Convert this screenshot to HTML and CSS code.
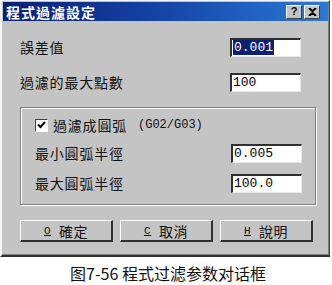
FILE: index.html
```html
<!DOCTYPE html>
<html>
<head>
<meta charset="utf-8">
<link rel="stylesheet" href="styles.css">
</head>
<body>
<div class="dialog">
  <div class="titlebar">
    <span class="title">程式過濾設定</span>
    <div class="tbtns">
      <span class="tbtn">?</span>
      <span class="tbtn x">
        <svg width="9" height="8" viewBox="0 0 9 8"><path d="M1 0L4.5 3.2L8 0M1 8L4.5 4.8L8 8" stroke="#000" stroke-width="2" fill="none"/></svg>
      </span>
    </div>
  </div>
  <div class="content">
    <div class="row"><span class="lbl">誤差值</span><div class="field"><span class="sel">0.001</span></div></div>
    <div class="row"><span class="lbl">過濾的最大點數</span><div class="field">100</div></div>
    <div class="group">
      <div class="chkrow"><span class="chk"><svg width="9" height="8" viewBox="0 0 9 8"><path d="M1 3.5L3.5 6L8 1" stroke="#000" stroke-width="2" fill="none"/></svg></span><span class="lbl">過濾成圓弧</span><span class="code">(G02/G03)</span></div>
      <div class="row inner"><span class="lbl">最小圓弧半徑</span><div class="field">0.005</div></div>
      <div class="row inner"><span class="lbl">最大圓弧半徑</span><div class="field">100.0</div></div>
    </div>
    <div class="buttons">
      <div class="btn"><span class="u">O</span><span>確定</span></div>
      <div class="btn"><span class="u">C</span><span>取消</span></div>
      <div class="btn"><span class="u">H</span><span>說明</span></div>
    </div>
  </div>
</div>
<div class="caption">图7-56 程式过滤参数对话框</div>
</body>
</html>
```
FILE: styles.css
```css
html, body { margin: 0; padding: 0; background: #fff; }
body { width: 332px; height: 285px; overflow: hidden; font-family: "Noto Sans CJK TC", "Noto Sans", sans-serif; }
.dialog {
  width: 327px; height: 254px;
  background: #c4c4c4;
  border-left: 2px solid #f4f4f4;
  border-top: 1px solid #f4f4f4;
  border-right: 1px solid #404040;
  border-bottom: 2px solid #303030;
  box-shadow: inset -1px -1px 0 #808080;
  display: flex; flex-direction: column;
}
.titlebar {
  height: 19px; margin: 1px 1px 0 1px;
  background: linear-gradient(to right, #0a1f78 0%, #1446a8 50%, #2a7ad8 100%);
  display: flex; align-items: center; justify-content: space-between;
}
.title { color: #fff; font-weight: bold; font-size: 14px; padding-left: 3px; letter-spacing: 1px; }
.tbtns { display: flex; gap: 2px; padding-right: 8px; }
.tbtn {
  width: 14px; height: 12px; background: #c4c4c4;
  border-top: 1px solid #fff; border-left: 1px solid #fff;
  border-right: 1px solid #404040; border-bottom: 1px solid #404040;
  font: bold 11px "Liberation Sans", sans-serif; color: #000;
  display: flex; align-items: center; justify-content: center; line-height: 1;
}
.content { padding: 16px 13px 0 18px; display: flex; flex-direction: column; }
.row { display: flex; align-items: center; justify-content: space-between; height: 20px; padding-right: 15px; }
.row + .row { margin-top: 15px; }
.lbl { font-size: 14px; color: #111; letter-spacing: 0.8px; }
.field {
  width: 67px; height: 16px; background: #fff;
  border-top: 2px solid #303030; border-left: 2px solid #303030;
  border-right: 1px solid #e8e8e8; border-bottom: 1px solid #e8e8e8;
  font: 13px "Liberation Mono", monospace; color: #000;
  display: flex; align-items: center; padding-left: 1px;
}
.sel { background: #0a2070; color: #fff; padding: 0 1px; }
.group {
  margin-top: 15px; height: 96px;
  border: 1px solid #808080; box-shadow: 1px 1px 0 #fff, inset 1px 1px 0 #fff;
  padding: 0 0 0 14px; display: flex; flex-direction: column;
}
.chkrow { display: flex; align-items: center; height: 20px; margin-top: 7px; gap: 5px; }
.chk {
  width: 11px; height: 11px; background: #fff;
  border-top: 1px solid #404040; border-left: 1px solid #404040;
  border-right: 1px solid #fff; border-bottom: 1px solid #fff;
  display: flex; align-items: center; justify-content: center;
}
.code { font: 12px "Liberation Mono", monospace; color: #111; margin-left: 6px; }
.row.inner { padding-right: 13px; }
.chkrow + .row.inner { margin-top: 8px; }
.row.inner + .row.inner { margin-top: 10px; }
.buttons { display: flex; gap: 7px; margin-top: 15px; }
.btn {
  width: 90px; height: 19px;
  border-top: 1px solid #fff; border-left: 1px solid #fff;
  border-right: 2px solid #303030; border-bottom: 2px solid #303030;
  display: flex; align-items: center; justify-content: center; gap: 8px;
  font-size: 14px; color: #111; letter-spacing: 0.5px;
}
.u { font: 11px "Liberation Mono", monospace; text-decoration: underline; }
.caption { text-align: center; font: 16px "Noto Sans CJK SC", sans-serif; color: #111; margin-top: 4px; padding-left: 4px; }
```
